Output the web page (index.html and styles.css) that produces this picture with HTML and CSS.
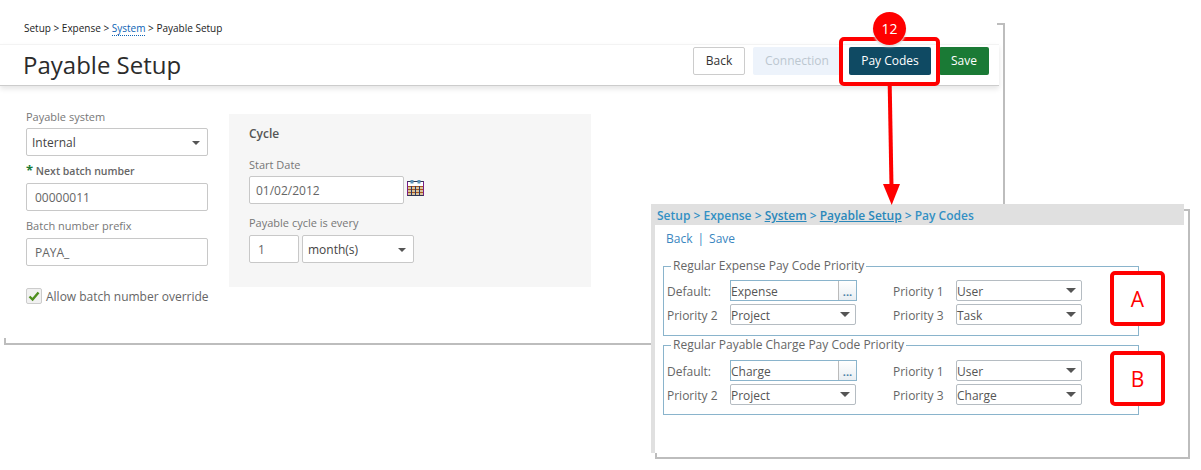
FILE: index.html
```html
<!DOCTYPE html>
<html lang="en">
<head>
<meta charset="utf-8">
<title>Payable Setup</title>
<link rel="stylesheet" href="styles.css">
</head>
<body>
<div class="canvas">
  <main class="main">
    <nav class="crumbs">Setup &gt; Expense &gt; <a class="crumb-link">System</a> &gt; Payable Setup</nav>
    <header class="head">
      <h1 class="title">Payable Setup</h1>
      <div class="actions">
        <button class="btn btn-back">Back</button>
        <button class="btn btn-conn">Connection</button>
        <button class="btn btn-pay">Pay Codes</button>
        <button class="btn btn-save">Save</button>
      </div>
    </header>
    <section class="form">
      <div class="col">
        <label class="lbl lbl-first">Payable system</label>
        <div class="ctl sel">Internal<i class="caret"></i></div>
        <label class="lbl lbl-req"><span class="star">*</span> Next batch number</label>
        <div class="ctl txt">00000011</div>
        <label class="lbl lbl-prefix">Batch number prefix</label>
        <div class="ctl txt">PAYA_</div>
        <div class="check">
          <span class="box"><svg width="14" height="14" viewBox="0 0 14 14"><path d="M2.500 7.500 L5.600 10.500 L11.500 3.500" fill="none" stroke="#4f8f1f" stroke-width="2.400"/></svg></span>
          <span class="check-text">Allow batch number override</span>
        </div>
      </div>
      <div class="cycle">
        <h2 class="cycle-title">Cycle</h2>
        <label class="lbl lbl-start">Start Date</label>
        <div class="row date-row">
          <div class="ctl txt date">01/02/2012</div>
          <svg class="cal" width="17" height="16" viewBox="0 0 17 16">
            <rect x="0.500" y="1.500" width="16" height="14" fill="#fff" stroke="#2f3550"/>
            <rect x="1" y="6" width="15" height="9" fill="#d9c39a"/>
            <path d="M1 6.500h15M1 9.500h15M1 12.500h15" stroke="#a8571f" fill="none"/>
            <path d="M4.500 6v9M8.500 6v9M12.500 6v9" stroke="#2c3a6a" fill="none"/>
            <path d="M16.500 1.500v14M0.500 1.500v14" stroke="#7a1f8a" fill="none"/>
            <rect x="3.500" y="0" width="3" height="3.500" fill="#5b93b8"/>
            <rect x="10.500" y="0" width="3" height="3.500" fill="#5b93b8"/>
          </svg>
        </div>
        <label class="lbl lbl-every">Payable cycle is every</label>
        <div class="row every-row">
          <div class="ctl txt num">1</div>
          <div class="ctl sel unit">month(s)<i class="caret"></i></div>
        </div>
      </div>
    </section>
  </main>

  <section class="popup">
    <div class="pop-crumbs">Setup &gt; Expense &gt; <u>System</u> &gt; <u>Payable Setup</u> &gt; Pay Codes</div>
    <div class="pop-body">
      <div class="pop-links">Back<span class="pipe">|</span>Save</div>
      <fieldset class="fs fs-a">
        <legend class="lg">Regular Expense Pay Code Priority</legend>
        <div class="grid">
          <span class="g-l">Default:</span>
          <div class="pick"><span class="pick-v">Expense</span><span class="pick-b">...</span></div>
          <span class="g-l">Priority 1</span>
          <div class="dd">User<i class="dd-c"></i></div>
          <span class="g-l">Priority 2</span>
          <div class="dd">Project<i class="dd-c"></i></div>
          <span class="g-l">Priority 3</span>
          <div class="dd">Task<i class="dd-c"></i></div>
        </div>
      </fieldset>
      <fieldset class="fs fs-b">
        <legend class="lg">Regular Payable Charge Pay Code Priority</legend>
        <div class="grid">
          <span class="g-l">Default:</span>
          <div class="pick"><span class="pick-v">Charge</span><span class="pick-b">...</span></div>
          <span class="g-l">Priority 1</span>
          <div class="dd">User<i class="dd-c"></i></div>
          <span class="g-l">Priority 2</span>
          <div class="dd">Project<i class="dd-c"></i></div>
          <span class="g-l">Priority 3</span>
          <div class="dd">Charge<i class="dd-c"></i></div>
        </div>
      </fieldset>
    </div>
  </section>

  <div class="mark mark-pay"></div>
  <div class="badge">12</div>
  <svg class="arrow" width="24" height="122" viewBox="0 0 24 122">
    <path d="M9.700 0 L11.500 102" stroke="#f00" stroke-width="4" fill="none"/>
    <path d="M3 99 H20 L11.700 120 Z" fill="#f00"/>
  </svg>
  <div class="mark mark-a">A</div>
  <div class="mark mark-b">B</div>
</div>
</body>
</html>
```
FILE: styles.css
```css
* { box-sizing: border-box; }
html, body { margin: 0; padding: 0; background: #fff; }
body { font-family: "Open Sans", "Liberation Sans", sans-serif; color: #444; }
.canvas { position: relative; width: 1201px; height: 470px; overflow: hidden; }

/* main window */
.main { position: relative; margin-left: 4px; width: 1001px; height: 345px; border-bottom: 2px solid #bdbdbd; }
.main::before { content: ""; position: absolute; left: 0; bottom: 0; width: 2px; height: 5px; background: #bdbdbd; }
.main::after { content: ""; position: absolute; right: 0; top: 23px; bottom: 0; width: 6px; border-top: 2px solid #bdbdbd; border-right: 2px solid #bdbdbd; }
.crumbs { height: 44px; padding: 21px 0 0 20px; font-size: 10px; line-height: 14px; color: #222; }
.crumb-link { color: #0b63b5; border-bottom: 1px dotted #0b63b5; }
.head { display: flex; align-items: flex-start; justify-content: space-between; width: 999px; height: 42px; margin-left: -4px; padding: 2px 10px 0 23px; border-top: 1px solid #f3f3f3; border-bottom: 1px solid #ccc; box-shadow: 0 3px 5px rgba(0,0,0,.1); }
.title { margin: 1px 0 0; font-size: 24px; line-height: 34px; font-weight: 400; color: #2b2b2b; }
.actions { display: flex; gap: 8px; }
.btn { height: 28px; padding: 0; border: 0; border-radius: 2px; font: 400 12px/28px "Open Sans", sans-serif; }
.btn-back { width: 52px; background: #fff; border: 1px solid #ccc; color: #333; line-height: 26px; }
.btn-conn { width: 88px; background: #edf3fb; color: #bcc7d0; }
.btn-pay { width: 82px; background: #0f4a63; color: #fff; }
.btn-save { width: 50px; background: #1a7a35; color: #fff; }

.form { display: flex; align-items: flex-start; gap: 21px; padding: 24px 0 0 22px; }
.col { width: 182px; }
.lbl { display: block; font-size: 11px; line-height: 13px; padding-bottom: 2px; color: #777; }
.lbl-first { margin-bottom: 3px; }
.lbl-req { margin-top: 8px; margin-bottom: 4px; padding-bottom: 0; line-height: 15px; font-size: 10.500px; font-weight: 600; color: #666; }
.star { color: #1a7a35; font-weight: 700; font-size: 13px; line-height: 10px; }
.lbl-prefix { margin-top: 8px; margin-bottom: 4px; }
.ctl { position: relative; height: 28px; padding-top: 1px; background: #fff; border: 1px solid #c8c8c8; border-radius: 2px; font-size: 12px; line-height: 26px; }
.sel { padding-left: 5px; color: #444; }
.txt { padding-left: 8px; color: #666; }
.caret { position: absolute; right: 7px; top: 12px; width: 0; height: 0; border-left: 4px solid transparent; border-right: 4px solid transparent; border-top: 4px solid #555; }
.check { display: flex; align-items: center; gap: 4px; margin-top: 22px; height: 16px; }
.box { display: flex; align-items: center; justify-content: center; width: 16px; height: 16px; border: 1px solid #ccc; border-radius: 2px; background: #f1f1f1; }
.check-text { font-size: 12px; color: #666; white-space: nowrap; }

.cycle { width: 362px; height: 173px; margin-top: 4px; padding: 12px 0 0 20px; background: #f6f6f6; }
.cycle-title { margin: 0; font-size: 12px; line-height: 16px; font-weight: 600; color: #555; }
.lbl-start { margin-top: 16px; margin-bottom: 3px; }
.lbl-every { margin-top: 12px; margin-bottom: 4px; }
.row { display: flex; }
.date { width: 155px; padding-left: 6px; }
.cal { margin: 4px 0 0 3px; }
.every-row { gap: 3px; }
.num { width: 50px; padding-left: 8px; }
.unit { width: 112px; }

/* pop-up window */
.popup { position: absolute; left: 651px; top: 204px; width: 539px; height: 255px; background: linear-gradient(#bdbdbd, #bdbdbd) left 4px bottom 0 / 2px 6px no-repeat #fff; }
.popup::before { content: ""; position: absolute; left: 4px; top: 5px; right: 0; bottom: 0; border-top: 2px solid #bdbdbd; border-right: 2px solid #bdbdbd; border-bottom: 2px solid #bdbdbd; }
.popup::after { content: ""; position: absolute; left: 0; top: 0; bottom: 6px; width: 4px; background: #e0e0e0; }
.pop-crumbs { position: relative; z-index: 1; height: 21px; width: 533px; padding-left: 6px; background: #e0e0e0; font-size: 12px; font-weight: 600; line-height: 23px; color: #3390c4; white-space: nowrap; }
.pop-crumbs u { color: #2b88bb; }
.pop-body { position: relative; z-index: 1; padding: 6px 0 0 12px; }
.pop-links { padding-left: 3px; font-size: 12px; line-height: 16px; color: #3a86c0; }
.pipe { margin: 0 5px; color: #3a86c0; }
.fs { width: 476px; height: 77px; margin: 0; padding: 0; border: 1px solid #8ab4cc; }
.fs-a { margin-top: 12px; }
.fs-b { margin-top: 2px; }
.lg { margin-left: 7px; padding: 0 2px; font-size: 12px; line-height: 14px; color: #666; }
.grid { display: grid; grid-template-columns: 63px 163px 63px 126px; grid-template-rows: 21px 21px; row-gap: 3px; padding: 7px 0 0 3px; }
.fs-b .grid { padding-top: 8px; }
.g-l { font-size: 12px; line-height: 23px; color: #666; }
.pick { display: flex; width: 127px; height: 21px; font-size: 12px; line-height: 21px; color: #555; border: 1px solid #8ab4cc; }
.pick-v { flex: 1; }
.pick-b { width: 18px; height: 19px; border-left: 1px solid #bbb; background: linear-gradient(#fff, #e9eef2); text-align: center; font-size: 11px; font-weight: 700; line-height: 21px; color: #4a7fa8; overflow: hidden; }
.dd { position: relative; width: 126px; height: 21px; background: #fff; border: 1px solid #b5bcc2; border-radius: 2px; font-size: 12px; line-height: 21px; color: #555; }
.dd-c { position: absolute; right: 5px; top: 7px; width: 0; height: 0; border-left: 5px solid transparent; border-right: 5px solid transparent; border-top: 5px solid #555; }

/* annotations */
.mark { position: absolute; z-index: 2; border: 4px solid #f00; border-radius: 5px; color: #f00; font-family: "Open Sans", sans-serif; font-size: 21px; text-align: center; }
.mark-pay { left: 839px; top: 37px; width: 101px; height: 49px; }
.mark-a { left: 1110px; top: 271px; width: 55px; height: 55px; line-height: 48px; background: #fff; }
.mark-b { left: 1110px; top: 351px; width: 55px; height: 55px; line-height: 48px; background: #fff; }
.badge { position: absolute; z-index: 3; left: 873px; top: 12px; width: 33px; height: 33px; border-radius: 50%; background: #f00; color: #fff; font-size: 14px; line-height: 33px; text-align: center; box-shadow: 0 2px 2px #ddd; }
.arrow { position: absolute; z-index: 3; left: 880px; top: 85px; }
```
